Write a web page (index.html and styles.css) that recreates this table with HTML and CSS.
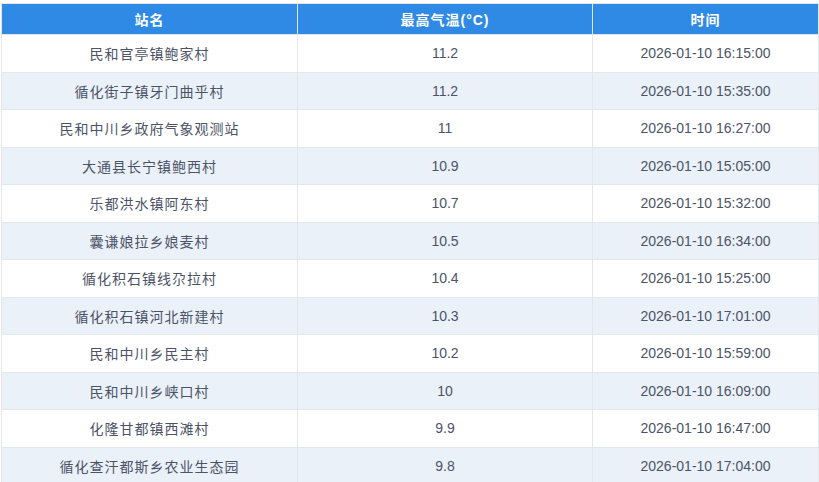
FILE: index.html
```html
<!DOCTYPE html>
<html lang="zh-CN">
<head>
<meta charset="utf-8">
<title>最高气温</title>
<link rel="stylesheet" href="styles.css">
</head>
<body>
<div class="wrap">
<table class="data">
<colgroup><col class="c1"><col class="c2"><col class="c3"></colgroup>
<thead>
<tr><th>站名</th><th>最高气温(°C)</th><th>时间</th></tr>
</thead>
<tbody>
<tr><td class="name">民和官亭镇鲍家村</td><td>11.2</td><td>2026-01-10 16:15:00</td></tr>
<tr><td class="name">循化街子镇牙门曲乎村</td><td>11.2</td><td>2026-01-10 15:35:00</td></tr>
<tr><td class="name">民和中川乡政府气象观测站</td><td>11</td><td>2026-01-10 16:27:00</td></tr>
<tr><td class="name">大通县长宁镇鲍西村</td><td>10.9</td><td>2026-01-10 15:05:00</td></tr>
<tr><td class="name">乐都洪水镇阿东村</td><td>10.7</td><td>2026-01-10 15:32:00</td></tr>
<tr><td class="name">囊谦娘拉乡娘麦村</td><td>10.5</td><td>2026-01-10 16:34:00</td></tr>
<tr><td class="name">循化积石镇线尕拉村</td><td>10.4</td><td>2026-01-10 15:25:00</td></tr>
<tr><td class="name">循化积石镇河北新建村</td><td>10.3</td><td>2026-01-10 17:01:00</td></tr>
<tr><td class="name">民和中川乡民主村</td><td>10.2</td><td>2026-01-10 15:59:00</td></tr>
<tr><td class="name">民和中川乡峡口村</td><td>10</td><td>2026-01-10 16:09:00</td></tr>
<tr><td class="name">化隆甘都镇西滩村</td><td>9.9</td><td>2026-01-10 16:47:00</td></tr>
<tr><td class="name">循化查汗都斯乡农业生态园</td><td>9.8</td><td>2026-01-10 17:04:00</td></tr>
</tbody>
</table>
</div>
</body>
</html>
```
FILE: styles.css
```css
html, body {
  margin: 0;
  padding: 0;
  background: #ffffff;
}
.wrap {
  padding: 3px 0 0 1px;
  width: 817px;
}
.data {
  width: 817px;
  border-collapse: collapse;
  table-layout: fixed;
  font-family: "Liberation Sans", "Noto Sans CJK SC", sans-serif;
  font-size: 14px;
  color: #4c5367;
}
.c1 { width: 296px; }
.c2 { width: 295px; }
.c3 { width: 226px; }
.data th {
  background: #2f8ae5;
  color: #ffffff;
  font-weight: bold;
  height: 30px;
  padding: 0;
  border: 1px solid #e2e5e9;
  text-align: center;
  letter-spacing: 1px;
}
.data td {
  height: 36.5px;
  padding: 0;
  border: 1px solid #e3e6ea;
  text-align: center;
}
.data td.name {
  letter-spacing: 1px;
}
.data tbody tr:nth-child(even) td {
  background: #eaf1f9;
}
```
